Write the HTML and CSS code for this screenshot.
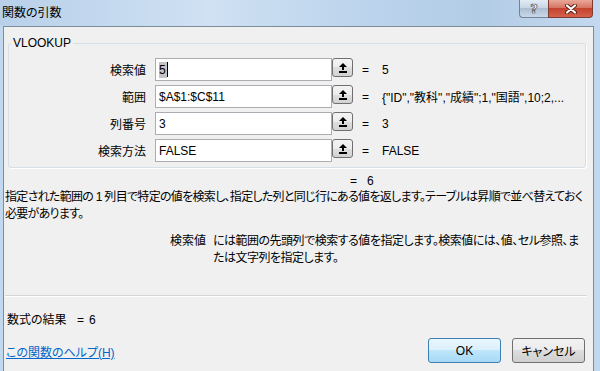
FILE: index.html
```html
<!DOCTYPE html>
<html lang="ja">
<head>
    <meta charset="UTF-8">
    <title>関数の引数</title>
    <link rel="stylesheet" href="styles.css">
</head>
<body>
    <div class="titlebar">
        <span class="title">関数の引数</span>
        <div class="caption">
            <span class="cap help">?</span>
            <span class="cap close">
                <svg width="12" height="10" viewBox="0 0 12 10">
                    <path d="M2 1.5 L10 8.5 M10 1.5 L2 8.5" stroke="#5a1d14" stroke-width="4" stroke-linecap="round"/>
                    <path d="M2 1.5 L10 8.5 M10 1.5 L2 8.5" stroke="#ffffff" stroke-width="2.2" stroke-linecap="round"/>
                </svg>
            </span>
        </div>
    </div>

    <div class="frame">
        <div class="client">
            <!-- argument group -->
            <fieldset class="group">
                <legend>VLOOKUP</legend>
                <div class="args">
                    <label>検索値</label>
                    <div class="ref">
                        <div class="box"><span class="sel">5</span><span class="caret"></span></div>
                        <button class="pick" type="button"><svg width="8" height="10" viewBox="0 0 8 10"><path d="M4 0 L8 4 L5 4 L5 7 L3 7 L3 4 L0 4 Z" fill="#000"/><rect x="0" y="8" width="8" height="2" fill="#000"/></svg></button>
                    </div>
                    <span class="eq">=</span><span class="val">5</span>

                    <label>範囲</label>
                    <div class="ref">
                        <div class="box">$A$1:$C$11</div>
                        <button class="pick" type="button"><svg width="8" height="10" viewBox="0 0 8 10"><path d="M4 0 L8 4 L5 4 L5 7 L3 7 L3 4 L0 4 Z" fill="#000"/><rect x="0" y="8" width="8" height="2" fill="#000"/></svg></button>
                    </div>
                    <span class="eq">=</span><span class="val">{"ID","教科","成績";1,"国語",10;2,...</span>

                    <label>列番号</label>
                    <div class="ref">
                        <div class="box">3</div>
                        <button class="pick" type="button"><svg width="8" height="10" viewBox="0 0 8 10"><path d="M4 0 L8 4 L5 4 L5 7 L3 7 L3 4 L0 4 Z" fill="#000"/><rect x="0" y="8" width="8" height="2" fill="#000"/></svg></button>
                    </div>
                    <span class="eq">=</span><span class="val">3</span>

                    <label>検索方法</label>
                    <div class="ref">
                        <div class="box">FALSE</div>
                        <button class="pick" type="button"><svg width="8" height="10" viewBox="0 0 8 10"><path d="M4 0 L8 4 L5 4 L5 7 L3 7 L3 4 L0 4 Z" fill="#000"/><rect x="0" y="8" width="8" height="2" fill="#000"/></svg></button>
                    </div>
                    <span class="eq">=</span><span class="val">FALSE</span>
                </div>
            </fieldset>

            <div class="result-line"><span>=</span><span>6</span></div>

            <p class="desc">指定された範囲の 1 列目で特定の値を検索し、指定した列と同じ行にある値を返します。テーブルは昇順で並べ替えておく必要があります。</p>

            <div class="arghelp">
                <span class="argname">検索値</span>
                <p>には範囲の先頭列で検索する値を指定します。検索値には、値、セル参照、または文字列を指定します。</p>
            </div>

            <div class="sep"></div>

            <div class="formula"><span class="flabel">数式の結果</span><span>=</span><span class="fval">6</span></div>

            <div class="footer">
                <a href="#" class="helplink">この関数のヘルプ(H)</a>
                <div class="buttons">
                    <button class="btn ok" type="button">OK</button>
                    <button class="btn" type="button">キャンセル</button>
                </div>
            </div>
        </div>
    </div>
</body>
</html>
```

FILE: styles.css
```css
body {
    margin: 0;
    width: 600px;
    height: 371px;
    overflow: hidden;
    font-family: "Liberation Sans", "Noto Sans CJK JP", sans-serif;
    font-size: 12px;
    font-feature-settings: "palt";
    color: #000;
    background: #c2d8ee;
}

/* title bar */
.titlebar {
    height: 26px;
    display: flex;
    justify-content: space-between;
    align-items: flex-start;
    background: linear-gradient(to right, #b8d0e9, #cfe1f3 35%, #bcd4ec 60%, #b3cce6 80%, #c4d9ef);
}

.title {
    padding: 6px 0 0 2px;
    line-height: 14px;
}

.caption {
    display: flex;
    margin-right: 7px;
}

.cap {
    height: 18px;
    box-sizing: border-box;
    display: flex;
    justify-content: center;
    align-items: center;
}

.cap.help {
    width: 29px;
    border: 1px solid #72849a;
    border-top: none;
    border-right: none;
    border-radius: 0 0 0 4px;
    background: linear-gradient(#e3ebf4, #c8d6e5 45%, #aebfd3 50%, #c9d8e9);
    color: #fff;
    font-family: "DejaVu Sans", sans-serif;
    font-weight: bold;
    font-size: 13px;
    -webkit-text-stroke: 0.7px #3d4c5e;
}

.cap.close {
    width: 45px;
    border: 1px solid #7d3b31;
    border-top: none;
    border-radius: 0 0 4px 0;
    background: linear-gradient(#e9a899, #d77563 45%, #c3432e 50%, #d4624c);
}

/* window frame */
.frame {
    display: flex;
    height: 345px;
}

.client {
    flex: 1;
    margin: 0 6px 0 3px;
    background: #f0f0f0;
    border: 1px solid #7e8d9c;
    border-bottom: none;
    display: flex;
    flex-direction: column;
}

.group {
    margin: 9px 7px 0 4px;
    padding: 0;
    border: 1px solid #d5dfe5;
    border-radius: 3px;
    box-shadow: 1px 1px 0 #fff;
}

.group legend {
    margin-left: 2px;
    padding: 0 2px;
    line-height: 14px;
}

.args {
    display: grid;
    grid-template-columns: 137px 198px 11px 1fr;
    grid-auto-rows: 23px;
    column-gap: 9px;
    row-gap: 4px;
    align-items: center;
    padding: 8px 0 5px 0;
}

.args label {
    text-align: right;
}

.ref {
    display: flex;
    align-items: flex-start;
    height: 23px;
}

.box {
    width: 177px;
    height: 23px;
    box-sizing: border-box;
    border: 1px solid #abadb3;
    background: #fff;
    padding-left: 3px;
    display: flex;
    align-items: center;
}

.sel {
    background: #c4c4c4;
    padding: 0 1px 0 0;
    line-height: 16px;
}

.caret {
    width: 1px;
    height: 15px;
    background: #000;
}

.pick {
    width: 21px;
    height: 19px;
    margin: 0;
    padding: 0;
    box-sizing: border-box;
    border: 1px solid #707070;
    border-radius: 3px;
    background: linear-gradient(#f4f4f4, #ececec 50%, #dfdfdf 50%, #d2d2d2);
    display: flex;
    justify-content: center;
    align-items: center;
}

.val {
    white-space: nowrap;
    overflow: hidden;
}

.result-line {
    display: flex;
    gap: 10px;
    margin-top: 6px;
    padding-left: 346px;
    line-height: 15px;
}

.desc {
    margin: 0;
    padding: 0 4px 0 1px;
    line-height: 17px;
    letter-spacing: -0.7px;
}

.arghelp {
    display: flex;
    margin-top: 10px;
    padding-left: 166px;
    line-height: 17px;
}

.argname {
    width: 36px;
    margin-right: 7px;
    flex-shrink: 0;
}

.arghelp p {
    margin: 0;
    padding-right: 8px;
    letter-spacing: -0.5px;
}

.sep {
    margin: 28px 6px 0 1px;
    border-top: 1px solid #d5d5d5;
    border-bottom: 1px solid #fff;
}

.formula {
    display: flex;
    margin-top: 16px;
    padding-left: 3px;
    line-height: 15px;
}

.flabel {
    width: 70px;
}

.fval {
    margin-left: 5px;
}

.footer {
    display: flex;
    justify-content: space-between;
    align-items: center;
    margin-top: 10px;
    padding: 0 8px 0 2px;
}

.helplink {
    color: #0066cc;
    margin-top: 2px;
}

.buttons {
    display: flex;
    gap: 11px;
}

.btn {
    width: 73px;
    height: 25px;
    margin: 0;
    padding: 0;
    font-family: inherit;
    font-size: 12px;
    font-feature-settings: "palt";
    color: #000;
    border: 1px solid #707070;
    border-radius: 3px;
    background: linear-gradient(#f2f2f2, #ebebeb 50%, #dddddd 50%, #cfcfcf);
}

.btn.ok {
    border-color: #3c7fb1;
    background: linear-gradient(#eaf6fd, #d9f0fc 50%, #bee6fd 50%, #a7d9f5);
}
```
